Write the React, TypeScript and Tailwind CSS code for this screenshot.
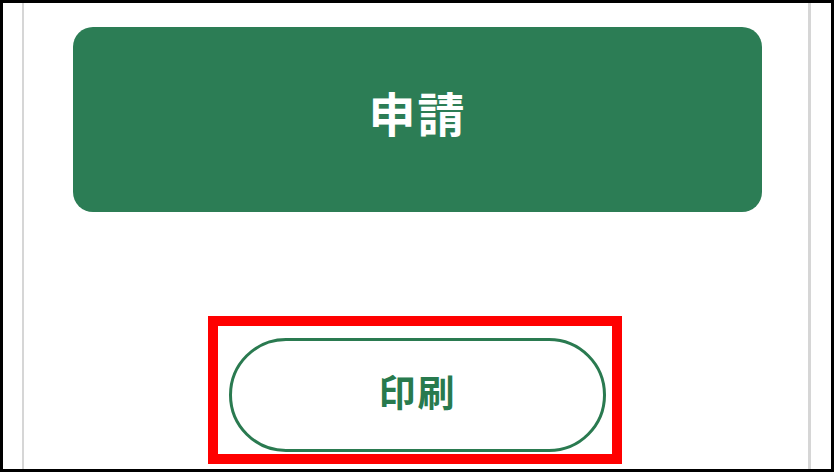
import React from "react";

export default function App() {
  const font = { fontFamily: '"Noto Sans CJK JP", "Noto Sans", sans-serif' };
  return (
    <div className="w-[835px] h-[473px] bg-white overflow-hidden" style={font}>
      <div className="w-[834px] h-[472px] border-[3px] border-black flex flex-row box-border">
        <div className="w-[19px] shrink-0" />
        <div className="w-[2px] shrink-0 bg-[#d6d6d6]" />
        <div className="flex-1 flex flex-col">
          <button className="mt-[24px] ml-[49px] w-[689px] h-[185px] rounded-[20px] bg-[#2c7d55] flex items-center justify-center pb-[16px]">
            <span className="text-white font-bold text-[47px] leading-none tracking-[2px]">申請</span>
          </button>
          <div className="mt-[104px] ml-[184px] w-[414px] h-[148px] border-[10px] border-[#ff0000] box-border">
            <button className="mt-[12px] ml-[11px] w-[377px] h-[114px] rounded-full border-[3px] border-[#2a7a50] bg-white flex items-center justify-center pb-[8px]">
              <span className="text-[#287a4e] font-bold text-[37px] leading-none tracking-[2px]">印刷</span>
            </button>
          </div>
        </div>
        <div className="w-[3px] shrink-0 bg-[#d6d6d6]" />
        <div className="w-[20px] shrink-0" />
      </div>
    </div>
  );
}
